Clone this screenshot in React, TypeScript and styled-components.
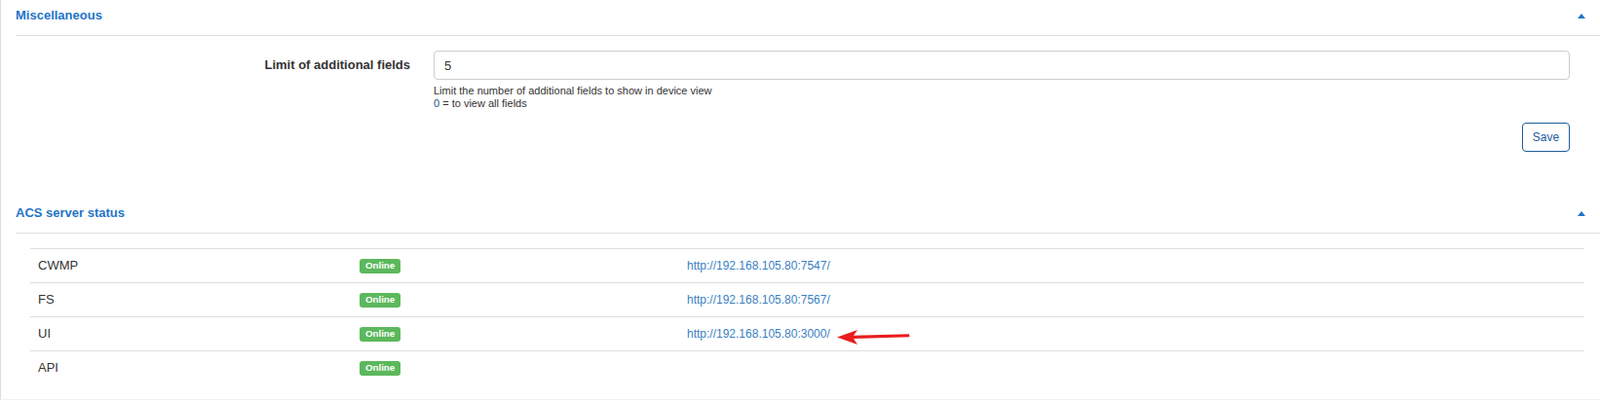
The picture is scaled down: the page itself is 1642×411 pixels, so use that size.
import styled, { createGlobalStyle } from 'styled-components';

const GlobalStyle = createGlobalStyle`
  html, body {
    margin: 0;
    padding: 0;
    background: #fff;
  }
  body {
    font-family: "Liberation Sans", Arial, Helvetica, sans-serif;
    font-size: 13px;
    color: #333;
  }
`;

const Page = styled.div`
  box-sizing: border-box;
  min-height: 411px;
  padding-left: 15px;
  border-left: 1px solid #dddddd;
  border-bottom: 1px solid #f2f2f2;
`;

const Section = styled.section<{ $gap?: number }>`
  margin-top: ${(p) => p.$gap ?? 0}px;
`;

const SectionHeader = styled.div`
  display: flex;
  align-items: center;
  justify-content: space-between;
  height: 37px;
  box-sizing: border-box;
  padding: 0 15px 0 0;
  border-bottom: 1px solid #dddddd;
`;

const Title = styled.h3`
  margin: 0;
  font-size: 13px;
  line-height: 18px;
  font-weight: 700;
  color: #1f74c8;
  transform: translateY(-2px);
`;

const Caret = styled.svg`
  display: block;
  width: 8px;
  height: 5px;
  color: #1f74c8;
  transform: translateY(-2px);
`;

const FormBody = styled.div`
  padding: 15px 31px 0 0;
`;

const FormRow = styled.div`
  display: grid;
  grid-template-columns: 405px 1fr;
  column-gap: 24px;
  align-items: start;
`;

const Label = styled.label`
  text-align: right;
  font-weight: 700;
  font-size: 13px;
  line-height: 30px;
  color: #333;
`;

const Input = styled.input`
  display: block;
  box-sizing: border-box;
  width: 100%;
  height: 30px;
  padding: 0 10px;
  border: 1px solid #cccccc;
  border-radius: 4px;
  font-family: inherit;
  font-size: 13px;
  color: #333;
  outline: none;
`;

const Help = styled.div`
  margin-top: 5px;
  font-size: 11px;
  line-height: 13px;
  color: #333;
`;

const Zero = styled.span`
  color: #23527c;
`;

const Actions = styled.div`
  display: flex;
  justify-content: flex-end;
  margin-top: 13px;
`;

const SaveButton = styled.button`
  box-sizing: border-box;
  width: 49px;
  height: 30px;
  padding: 0;
  background: #fff;
  border: 1px solid #1d5c9b;
  border-radius: 4px;
  color: #1d5c9b;
  font-family: inherit;
  font-size: 12px;
  cursor: pointer;
`;

const TableWrap = styled.div`
  padding: 15px 16px 0 15px;
`;

const Table = styled.table`
  width: 100%;
  border-collapse: collapse;
  table-layout: fixed;
`;

const Row = styled.tr`
  border-top: 1px solid #dddddd;
`;

const Cell = styled.td<{ $width?: number }>`
  position: relative;
  width: ${(p) => (p.$width ? `${p.$width}px` : 'auto')};
  padding: 8px;
  font-size: 13px;
  line-height: 18px;
  color: #333;
  vertical-align: top;
`;

const Badge = styled.span`
  display: inline-block;
  padding: 2px 5.9px 2.9px;
  font-size: 9.75px;
  font-weight: 700;
  line-height: 1;
  color: #fff;
  background: #5cb85c;
  border-radius: 3px;
  vertical-align: 1px;
`;

const Link = styled.a`
  font-size: 12px;
  color: #3a7fc1;
  text-decoration: none;
`;

const Arrow = styled.svg`
  position: absolute;
  left: 162px;
  top: 12px;
  width: 75px;
  height: 16px;
`;

const services = [
  { name: 'CWMP', url: 'http://192.168.105.80:7547/' },
  { name: 'FS', url: 'http://192.168.105.80:7567/' },
  { name: 'UI', url: 'http://192.168.105.80:3000/', marked: true },
  { name: 'API', url: '' },
];

const CollapseCaret = () => (
  <Caret viewBox="0 0 8 5">
    <path d="M0 5 L4 0 L8 5 Z" fill="currentColor" />
  </Caret>
);

const App = () => {
  return (
    <>
      <GlobalStyle />
      <Page>
        <Section>
          <SectionHeader>
            <Title>Miscellaneous</Title>
            <CollapseCaret />
          </SectionHeader>
          <FormBody>
            <FormRow>
              <Label htmlFor="limit">Limit of additional fields</Label>
              <div>
                <Input id="limit" defaultValue="5" />
                <Help>
                  Limit the number of additional fields to show in device view
                  <br />
                  <Zero>0</Zero> = to view all fields
                </Help>
              </div>
            </FormRow>
            <Actions>
              <SaveButton type="button">Save</SaveButton>
            </Actions>
          </FormBody>
        </Section>

        <Section $gap={47}>
          <SectionHeader>
            <Title>ACS server status</Title>
            <CollapseCaret />
          </SectionHeader>
          <TableWrap>
            <Table>
              <tbody>
                {services.map((s) => (
                  <Row key={s.name}>
                    <Cell $width={314}>{s.name}</Cell>
                    <Cell $width={320}>
                      <Badge>Online</Badge>
                    </Cell>
                    <Cell>
                      {s.url && <Link href="#">{s.url}</Link>}
                      {s.marked && (
                        <Arrow viewBox="0 0 75 16">
                          <path
                            d="M0 8.5 L21 1 L17 6.8 L74 5.2 L74.5 8.3 L17 10 L21 16 Z"
                            fill="#ea1c1c"
                          />
                        </Arrow>
                      )}
                    </Cell>
                  </Row>
                ))}
              </tbody>
            </Table>
          </TableWrap>
        </Section>
      </Page>
    </>
  );
};

export default App;
